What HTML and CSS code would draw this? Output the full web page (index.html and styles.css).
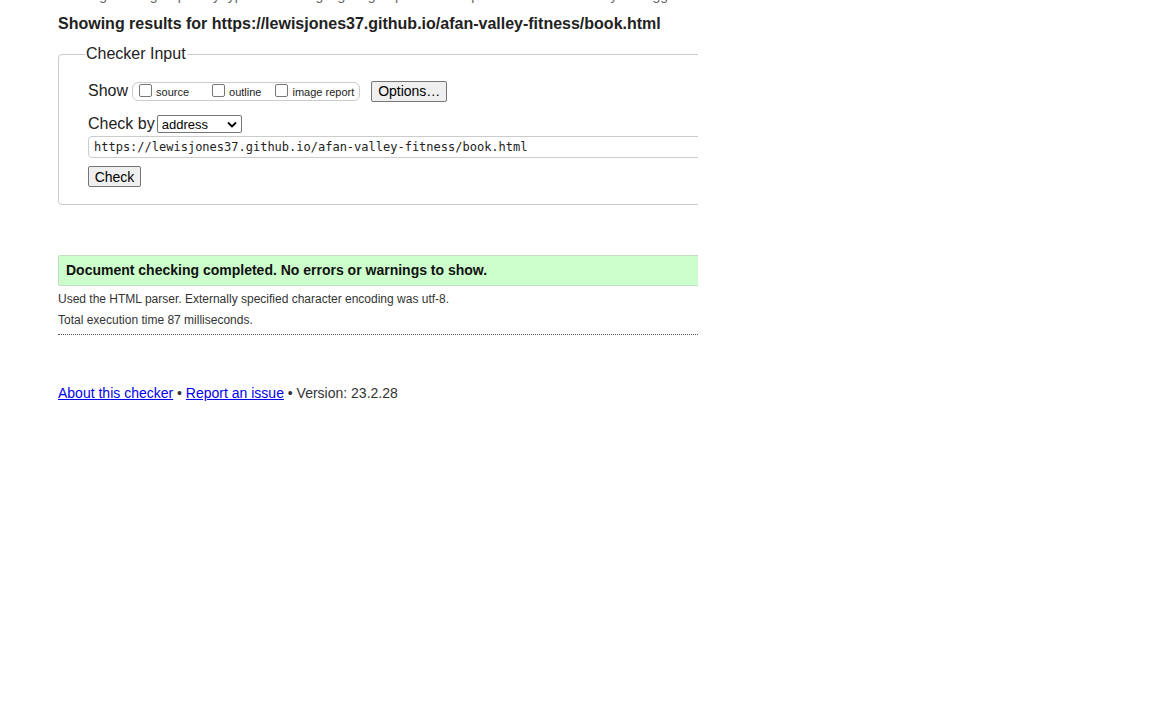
FILE: index.html
```html
<!DOCTYPE html>
<html>
<head>
<meta charset="utf-8">
<link rel="stylesheet" href="styles.css">
</head>
<body>
<div class="page">
  <p class="cut">Messages are grouped by type and the highlighting of problematic parts of the source may be toggled by filtering; options are shown below</p>
  <h2 class="results">Showing results for https://lewisjones37.github.io/afan-valley-fitness/book.html</h2>
  <fieldset class="checker">
    <legend>Checker Input</legend>
    <div class="row show-row">
      <span class="lbl">Show</span>
      <span class="opts">
        <label><span class="cb"></span>source</label>
        <label><span class="cb"></span>outline</label>
        <label><span class="cb"></span>image report</label>
      </span>
      <span class="btn options">Options…</span>
    </div>
    <div class="row by-row">
      <span class="lbl">Check by</span>
      <span class="select">address<svg width="10" height="7" viewBox="0 0 10 7"><path d="M1 1.5 L5 5.5 L9 1.5" fill="none" stroke="#000" stroke-width="1.8"/></svg></span>
    </div>
    <div class="url">https://lewisjones37.github.io/afan-valley-fitness/book.html</div>
    <span class="btn check">Check</span>
  </fieldset>
  <div class="success">Document checking completed. No errors or warnings to show.</div>
  <p class="info">Used the HTML parser. Externally specified character encoding was utf-8.</p>
  <p class="info">Total execution time 87 milliseconds.</p>
  <div class="footer"><a href="#">About this checker</a> • <a href="#">Report an issue</a> • Version: 23.2.28</div>
</div>
</body>
</html>
```
FILE: styles.css
```css
html, body { margin: 0; padding: 0; background: #fff; }
body { font-family: "Liberation Sans", Arial, sans-serif; color: #222; }
.page { width: 640px; margin-left: 58px; overflow: hidden; }
.cut { margin: -12px 0 0 0; height: 14px; font-size: 14px; line-height: 14px; color: #666; white-space: nowrap; }
.results { margin: 13px 0 0 0; font-size: 16px; font-weight: bold; line-height: 18px; white-space: nowrap; color: #222; }
.checker { margin: 12px 0 0 0; width: 800px; border: 1px solid #ccc; border-radius: 4px; padding: 0 0 16px 29px; box-sizing: border-box; height: 160px; }
.checker legend { font-size: 16px; padding: 0 1px; margin-left: -3px; color: #222; line-height: 18px; }
.row { display: flex; align-items: center; }
.show-row { margin-top: 16px; height: 24px; }
.lbl { font-size: 16px; color: #222; margin-right: 3px; }
.opts { display: flex; align-items: center; border: 1px solid #ccc; border-radius: 6px; height: 17px; padding: 0 5px 0 6px; font-size: 11px; line-height: 12px; margin-left: 1px; }
.opts label { display: flex; align-items: flex-end; margin-right: 23px; }
.opts label:last-child { margin-right: 0; }
.opts label:nth-child(2) { margin-right: 14px; }
.cb { display: inline-block; width: 11px; height: 11px; border: 1px solid #777; border-radius: 2px; margin-right: 4px; margin-bottom: 1px; background: #fff; }
.btn { display: inline-flex; align-items: center; justify-content: center; border: 1px solid #767676; border-radius: 2px; background: #efefef; font-size: 13px; color: #000; box-sizing: border-box; }
.options { margin-left: 11px; width: 76px; height: 21px; font-size: 14px; }
.by-row { margin-top: 11px; height: 20px; }
.select { display: inline-flex; align-items: center; justify-content: space-between; width: 85px; height: 18px; box-sizing: border-box; border: 1px solid #767676; border-radius: 2px; font-size: 13px; color: #000; padding: 0 4px 0 4px; margin-left: -1px; }
.url { margin-top: 2px; height: 22px; box-sizing: border-box; border: 1px solid #ccc; border-radius: 4px; font-family: "DejaVu Sans Mono", monospace; font-size: 12px; line-height: 20px; padding-left: 5px; color: #222; width: 760px; }
.check { margin-top: 8px; width: 53px; height: 21px; font-size: 14px; }
.success { margin-top: 50px; width: 800px; height: 31px; box-sizing: border-box; background: #ccffcc; border: 1px solid #c5dcc5; border-radius: 2px; font-weight: bold; font-size: 14px; line-height: 28px; padding-left: 7px; color: #111; }
.info { margin: 0; font-size: 12px; color: #333; line-height: 14px; }
.success + .info { margin-top: 6px; }
.info + .info { margin-top: 7px; padding-bottom: 7px; border-bottom: 1px dotted #555; }
.footer { margin-top: 50px; font-size: 14px; color: #333; }
.footer a { color: #0000ee; text-decoration: underline; }
```
